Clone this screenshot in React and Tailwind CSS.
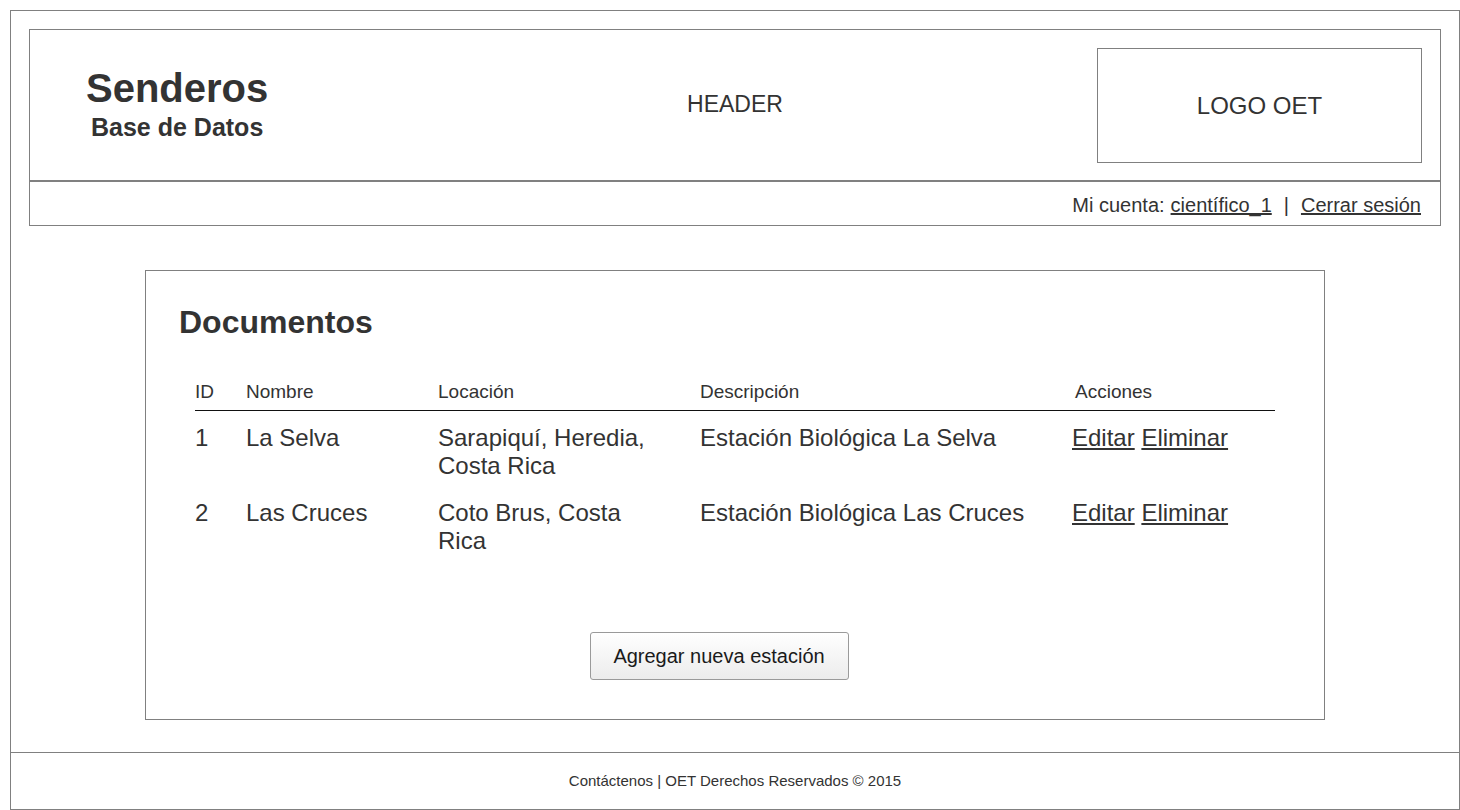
import React from "react"

const rows = [
  {
    id: 1,
    name: "La Selva",
    location: "Sarapiquí, Heredia, Costa Rica",
    desc: "Estación Biológica La Selva",
  },
  {
    id: 2,
    name: "Las Cruces",
    location: "Coto Brus, Costa Rica",
    desc: "Estación Biológica Las Cruces",
  },
]

const cols = "grid grid-cols-[51px_192px_262px_372px_1fr]"

const App = () => {
  return (
    <div className="w-[1460px] h-[810px] bg-white pt-[10px] pl-[10px] font-['Liberation_Sans',Arial,sans-serif] text-[#333333]">
      <div className="w-[1450px] h-[800px] border border-[#808080] flex flex-col">
        {/* header */}
        <div className="mx-[18px] mt-[18px] border border-[#808080]">
          <div className="h-[152px] grid grid-cols-[1fr_auto_1fr] border-b-2 border-[#808080]">
            <div className="self-start pt-[36px] pl-[56px]">
              <div className="inline-flex flex-col items-center font-bold">
                <span className="text-[40px] leading-[44px]">Senderos</span>
                <span className="text-[25px] leading-[28px] mt-[3px]">Base de Datos</span>
              </div>
            </div>
            <div className="self-center text-[23px] leading-[28px] pb-[2px]">HEADER</div>
            <div className="flex justify-end pt-[18px] pr-[18px]">
              <div className="w-[325px] h-[115px] border border-[#808080] flex items-center justify-center text-[24px]">
                LOGO OET
              </div>
            </div>
          </div>
          <div className="h-[43px] flex items-center justify-end pr-[19px] text-[20px] pt-[2px]">
            <span>Mi cuenta:</span>
            <a href="#" className="underline ml-[6px]">científico_1</a>
            <span className="mx-[12px]">|</span>
            <a href="#" className="underline">Cerrar sesión</a>
          </div>
        </div>

        {/* content card */}
        <div className="mx-auto mt-[44px] w-[1180px] border border-[#808080] pt-[33px] pb-[39px]">
          <h1 className="pl-[33px] text-[32px] leading-[36px] font-bold">Documentos</h1>
          <div className="ml-[49px] w-[1080px] mt-[41px]">
            <div className={`${cols} text-[19px] leading-[22px] pb-[7px] border-b border-[#111111]`}>
              <span>ID</span>
              <span>Nombre</span>
              <span>Locación</span>
              <span>Descripción</span>
              <span className="pl-[3px]">Acciones</span>
            </div>
            <div className="pt-[13px]">
              {rows.map((r) => (
                <div key={r.id} className={`${cols} text-[24px] leading-[28px] h-[75px]`}>
                  <span>{r.id}</span>
                  <span>{r.name}</span>
                  <span className="pr-[40px]">{r.location}</span>
                  <span>{r.desc}</span>
                  <span>
                    <a href="#" className="underline">Editar</a>{" "}
                    <a href="#" className="underline">Eliminar</a>
                  </span>
                </div>
              ))}
            </div>
          </div>
          <div className="flex justify-center mt-[58px] pr-[32px]">
            <button
              type="button"
              className="w-[259px] h-[48px] rounded-[3px] border border-[#9a9a9a] bg-gradient-to-b from-white to-[#ececec] text-[20px] text-[#1a1a1a]"
            >
              Agregar nueva estación
            </button>
          </div>
        </div>

        {/* footer */}
        <div className="mt-auto border-t border-[#808080] h-[57px] flex items-center justify-center text-[15px]">
          Contáctenos | OET Derechos Reservados © 2015
        </div>
      </div>
    </div>
  )
}

export default App
